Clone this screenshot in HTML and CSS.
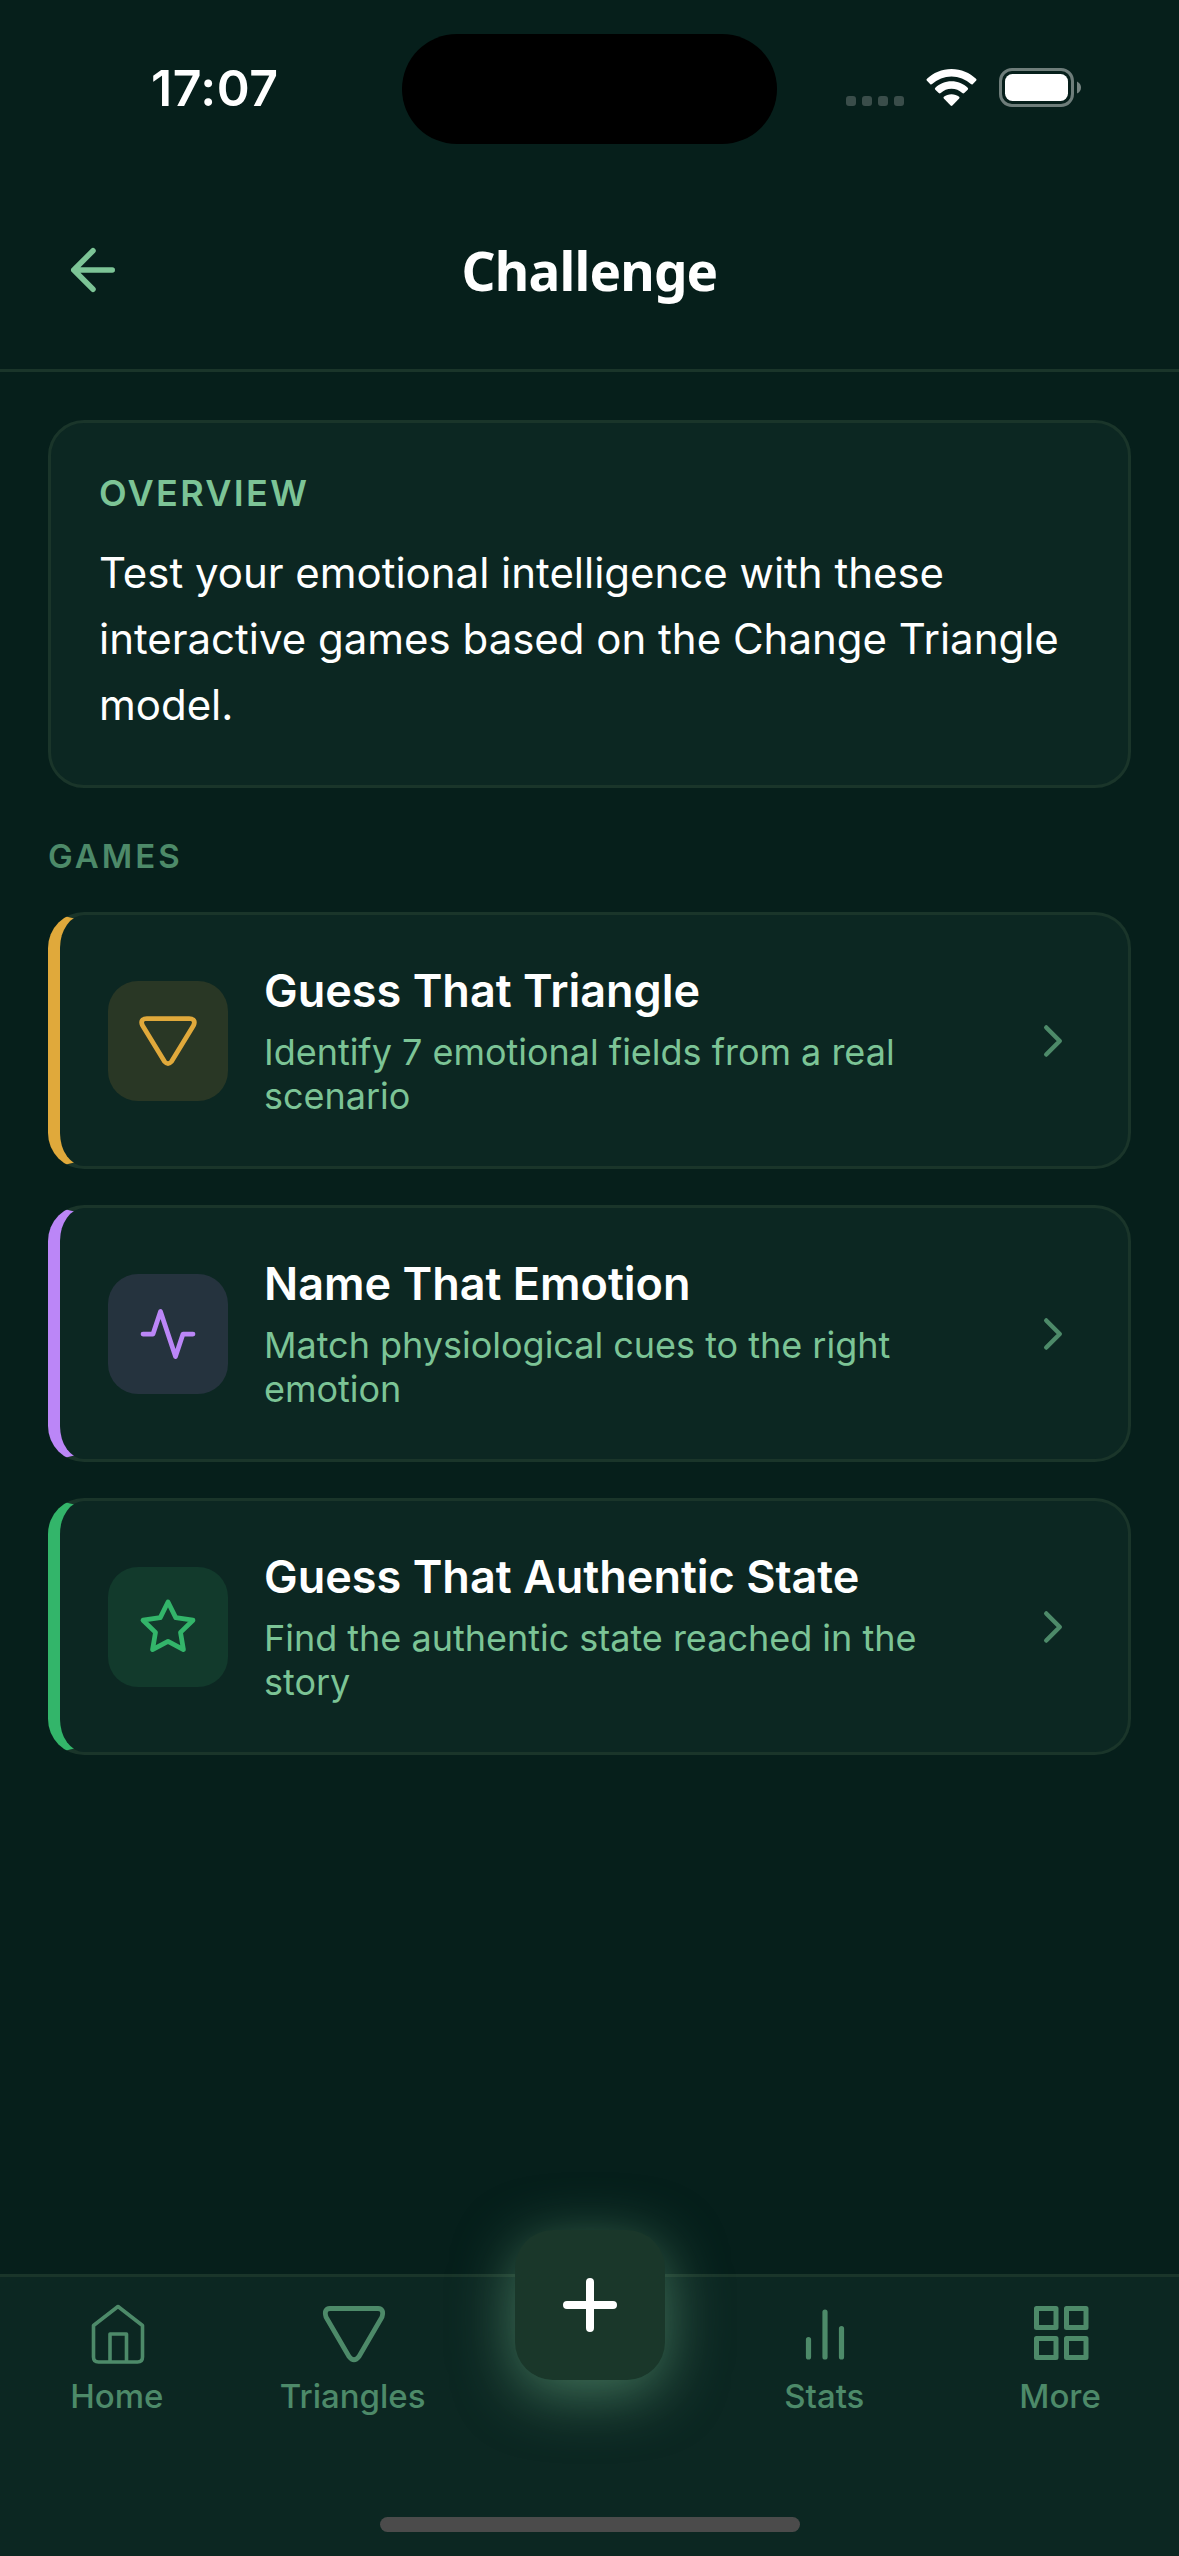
FILE: index.html
```html
<!DOCTYPE html>
<html lang="en">
<head>
<meta charset="utf-8">
<title>Challenge</title>
<link rel="stylesheet" href="styles.css">
</head>
<body>
<div class="screen">
  <div class="status-bar">
    <div class="time">17:07</div>
    <div class="island"></div>
    <div class="indicators">
      <div class="signal"><span></span><span></span><span></span><span></span></div>
      <svg class="wifi" width="51" height="37.500" viewBox="0 0 52 38" fill="#fff" preserveAspectRatio="none">
        <path d="M26 0C35.900 0 44.600 3.800 51 10Q52 11 51 12L47.600 15.400Q46.800 16.200 45.800 15.300A29 29 0 0 0 6.200 15.300Q5.200 16.200 4.400 15.400L1 12Q0 11 1 10C7.400 3.800 16.100 0 26 0Z"/>
        <path d="M26 12.500C32.400 12.500 38.200 15 42.500 19Q43.500 20 42.500 21L39 24.400Q38 25.300 37 24.400A16.200 16.200 0 0 0 15 24.400Q14 25.300 13 24.400L9.500 21Q8.500 20 9.500 19C13.800 15 19.600 12.500 26 12.500Z"/>
        <path d="M26 25.500C29 25.500 31.700 26.500 33.800 28Q34.700 29 33.800 30L26.900 37Q26 37.800 25.100 37L18.200 30Q17.300 29 18.200 28C20.300 26.500 23 25.500 26 25.500Z"/>
      </svg>
      <svg class="battery" width="82" height="39" viewBox="0 0 82 39">
        <rect x="1.500" y="1.500" width="72" height="36" rx="11.500" fill="none" stroke="#fff" stroke-opacity=".42" stroke-width="3"/>
        <rect x="6" y="6" width="63" height="27" rx="7.500" fill="#fff"/>
        <path d="M78 13.500Q82 15.500 82 19.500T78 25.500Z" fill="#fff" fill-opacity=".45"/>
      </svg>
    </div>
  </div>

  <header class="header">
    <svg class="back" width="66" height="66" viewBox="0 0 24 24"><path d="M19 12H5M12 19L5 12L12 5"/></svg>
    <h1 class="title">Challenge</h1>
  </header>

  <main class="content">
    <section class="overview">
      <h2 class="overview-label">OVERVIEW</h2>
      <p class="overview-text">Test your emotional intelligence with these interactive games based on the Change Triangle model.</p>
    </section>

    <h2 class="section-label">GAMES</h2>

    <div class="games">
      <article class="game amber">
        <div class="tile"><svg width="60" height="60" viewBox="0 0 24 24"><path d="M3.600 3H20.400Q23.400 3.200 22.200 5.800L13.400 20.200Q12 21.800 10.600 20.200L1.800 5.800Q.6 3.200 3.600 3Z"/></svg></div>
        <div class="game-body">
          <h3 class="game-title">Guess That Triangle</h3>
          <p class="game-desc">Identify 7 emotional fields from a real scenario</p>
        </div>
        <svg class="chevron" width="54" height="54" viewBox="0 0 24 24"><path d="M9 18L15 12L9 6"/></svg>
      </article>
      <article class="game violet">
        <div class="tile"><svg width="60" height="60" viewBox="0 0 24 24"><path d="M22 12H18L15 21L9 3L6 12H2"/></svg></div>
        <div class="game-body">
          <h3 class="game-title">Name That Emotion</h3>
          <p class="game-desc">Match physiological cues to the right emotion</p>
        </div>
        <svg class="chevron" width="54" height="54" viewBox="0 0 24 24"><path d="M9 18L15 12L9 6"/></svg>
      </article>
      <article class="game green">
        <div class="tile"><svg width="60" height="60" viewBox="0 0 24 24"><path d="M12 2L15.090 8.260L22 9.270L17 14.140L18.180 21.020L12 17.770L5.820 21.020L7 14.140L2 9.270L8.910 8.260Z"/></svg></div>
        <div class="game-body">
          <h3 class="game-title">Guess That Authentic State</h3>
          <p class="game-desc">Find the authentic state reached in the story</p>
        </div>
        <svg class="chevron" width="54" height="54" viewBox="0 0 24 24"><path d="M9 18L15 12L9 6"/></svg>
      </article>
    </div>
  </main>

  <nav class="tab-bar">
    <div class="tabs">
      <div class="tab">
        <svg width="66" height="66" viewBox="0 0 66 66" stroke-width="3.600"><path d="M33 5.500L57.500 24.500V56Q57.500 61 52.500 61H13.500Q8.500 61 8.500 56V24.500ZM25 61V33H41.500V61"/></svg>
        <span>Home</span>
      </div>
      <div class="tab">
        <svg width="66" height="66" viewBox="0 0 66 66" stroke-width="4.800"><path d="M9 7.500H57Q63.500 8 61 16L38 55.500Q33 62 28 55.500L5 16Q2.500 8 9 7.500Z"/></svg>
        <span>Triangles</span>
      </div>
      <div class="tab tab-add">
        <div class="fab"><svg width="78" height="78" viewBox="0 0 78 78"><path d="M39 16V62M16 39H62"/></svg></div>
      </div>
      <div class="tab">
        <svg width="66" height="66" viewBox="0 0 66 66" stroke-width="5.200"><path d="M16.500 38.500V56M33 11V56M49.500 27.500V56"/></svg>
        <span>Stats</span>
      </div>
      <div class="tab">
        <svg width="66" height="66" viewBox="0 0 66 66" stroke-width="5"><path d="M8.500 7.500H28V26.500H8.500ZM38.500 7.500H58V26.500H38.500ZM8.500 37.500H28V56.500H8.500ZM38.500 37.500H58V56.500H38.500Z"/></svg>
        <span>More</span>
      </div>
    </div>
    <div class="home-indicator"></div>
  </nav>
</div>
</body>
</html>
```
FILE: styles.css
```css
* { box-sizing: border-box; }

body {
  margin: 0;
  background: #061f1b;
  font-family: Inter, "Liberation Sans", sans-serif;
  color: #fff;
}

h1, h2, h3, p { margin: 0; }

svg { display: block; flex: none; }

.screen {
  display: flex;
  flex-direction: column;
  width: 1179px;
  height: 2556px;
  overflow: hidden;
}

.status-bar {
  display: grid;
  grid-template-columns: 402px 375px 402px;
  height: 177px;
  flex: none;
}

.time {
  padding: 58px 0 0 151px;
  font-size: 50px;
  font-weight: 600;
  line-height: 60px;
  letter-spacing: .5px;
}

.island {
  height: 110px;
  margin-top: 34px;
  border-radius: 55px;
  background: #000;
}

.indicators {
  display: flex;
  padding-left: 69px;
}

.signal {
  display: flex;
  gap: 6px;
  padding-top: 96px;
  margin-right: 22px;
}

.signal span {
  width: 10px;
  height: 10px;
  border-radius: 3px;
  background: #3a4d4a;
}

.wifi { margin: 69px 22px 0 0; }
.battery { margin-top: 68px; }

.header {
  display: grid;
  grid-template-columns: 240px 1fr 240px;
  height: 195px;
  flex: none;
  border-bottom: 3px solid #1a352a;
}

.back {
  margin: 60px 0 0 60px;
  fill: none;
  stroke: #7cc496;
  stroke-width: 2;
  stroke-linecap: round;
  stroke-linejoin: round;
}

.title {
  padding-top: 61px;
  text-align: center;
  font-family: "Noto Sans", sans-serif;
  font-size: 53px;
  font-weight: 700;
  line-height: 66px;
  letter-spacing: -.8px;
}

.content {
  flex: 1;
  padding: 48px 48px 0;
}

.overview {
  padding: 48px;
  border: 3px solid #1a352a;
  border-radius: 36px;
  background: #0c2722;
}

.overview-label {
  margin-bottom: 25px;
  color: #7cc496;
  font-size: 36px;
  font-weight: 600;
  line-height: 44px;
  letter-spacing: 2.3px;
}

.overview-text {
  margin-bottom: -1px;
  font-size: 42px;
  line-height: 66px;
  letter-spacing: -.015px;
}

.section-label {
  margin: 48px 0 36px;
  color: #4d8a69;
  font-size: 33px;
  font-weight: 600;
  line-height: 40px;
  letter-spacing: 3px;
}

.games {
  display: flex;
  flex-direction: column;
  gap: 36px;
}

.game {
  display: flex;
  align-items: center;
  gap: 36px;
  height: 257px;
  padding: 0 48px;
  border: 3px solid #1a352a;
  border-left-width: 12px;
  border-radius: 36px;
  background: #0c2722;
}

.tile {
  display: flex;
  flex: none;
  align-items: center;
  justify-content: center;
  width: 120px;
  height: 120px;
  border-radius: 30px;
}

.tile svg {
  fill: none;
  stroke: currentColor;
  stroke-width: 1.900;
  stroke-linecap: round;
  stroke-linejoin: round;
}

.amber { border-left-color: #e0a93b; }
.amber .tile { color: #e0a93b; background: #293725; }
.violet { border-left-color: #bb86f7; }
.violet .tile { color: #bb86f7; background: #25333e; }
.green { border-left-color: #33b56a; }
.green .tile { color: #33b56a; background: #123a2c; }

.game-body { flex: 1; }

.game-title {
  margin-bottom: 12px;
  font-size: 45px;
  font-weight: 600;
  line-height: 55px;
}

.game-desc {
  width: 690px;
  color: #7cc496;
  font-size: 36px;
  line-height: 44px;
  letter-spacing: -.015px;
}

.chevron {
  fill: none;
  stroke: #4d8a69;
  stroke-width: 2;
  stroke-linecap: round;
  stroke-linejoin: round;
}

.tab-bar {
  display: flex;
  flex-direction: column;
  flex: none;
  height: 282px;
  border-top: 3px solid #1a352a;
  background: #0c2722;
}

.tabs {
  display: grid;
  grid-template-columns: repeat(5, 1fr);
  height: 240px;
}

.tab {
  display: flex;
  flex-direction: column;
  align-items: center;
  padding-top: 24px;
  gap: 9px;
  color: #4d8a69;
  font-size: 33px;
  font-weight: 500;
  line-height: 40px;
}

.tab span { margin-right: 2px; }

.tab svg {
  fill: none;
  stroke: #4d8a69;
  stroke-linecap: round;
  stroke-linejoin: round;
}

.tab-add { padding: 0 0 0 1px; }

.fab {
  display: flex;
  align-items: center;
  justify-content: center;
  width: 150px;
  height: 150px;
  margin-top: -47px;
  border-radius: 38px;
  background: #1a372a;
  box-shadow: 0 13px 60px rgba(124, 196, 150, .5);
}

.tab .fab svg {
  stroke: #fff;
  stroke-width: 8;
}

.home-indicator {
  width: 420px;
  height: 15px;
  margin: 0 auto;
  border-radius: 8px;
  background: #4b4b4b;
}
```
